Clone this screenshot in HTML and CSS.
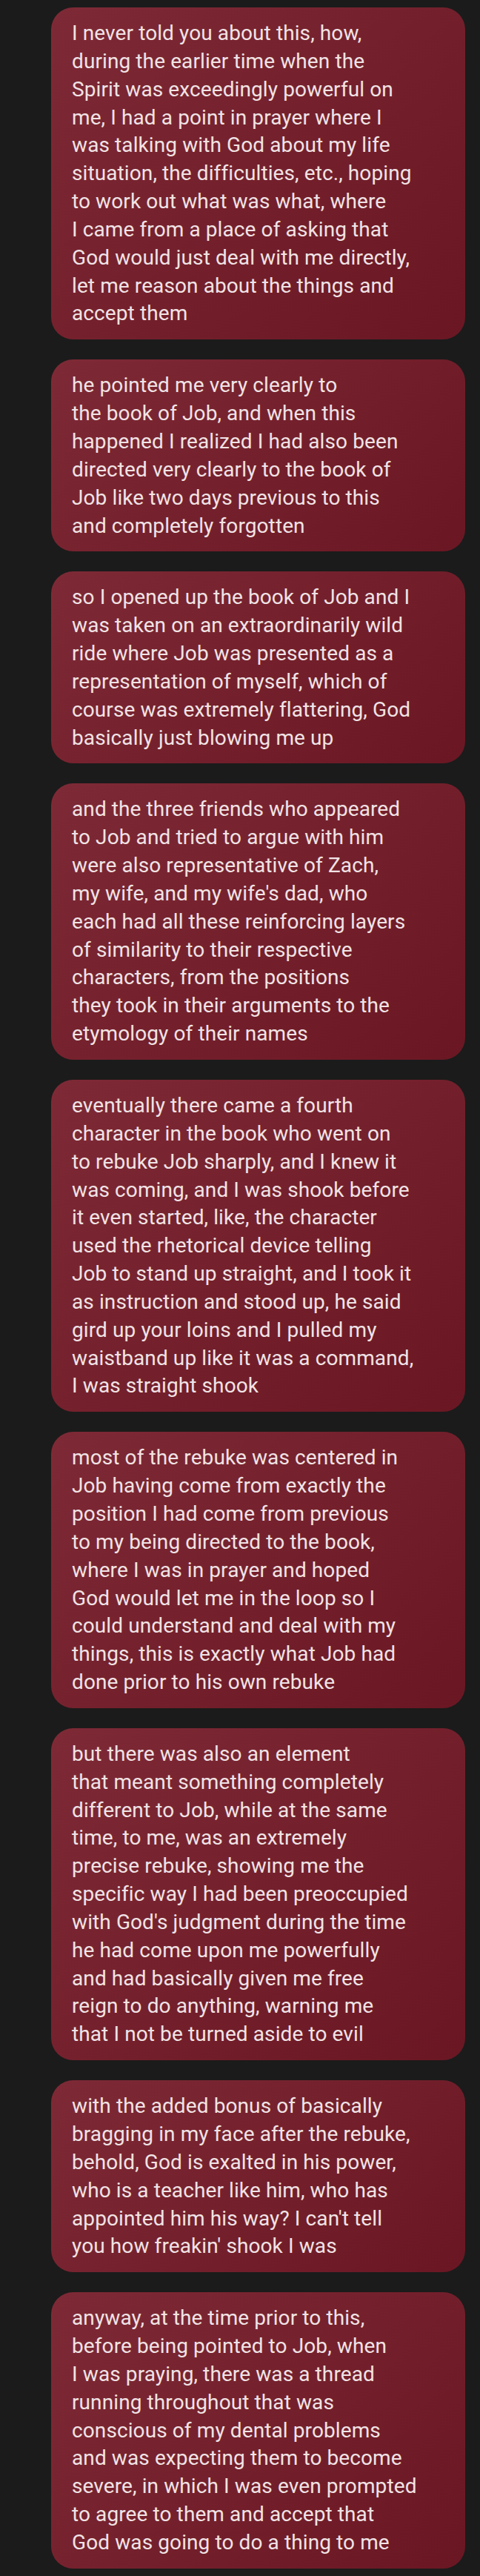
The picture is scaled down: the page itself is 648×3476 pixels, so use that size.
FILE: index.html
```html
<!DOCTYPE html>
<html lang="en">
<head>
<meta charset="utf-8">
<title>Messages</title>
<link rel="stylesheet" href="styles.css">
</head>
<body>
<main class="thread">
  <div class="bubble"><p class="msg">I never told you about this, how,<br>during the earlier time when the<br>Spirit was exceedingly powerful on<br>me, I had a point in prayer where I<br>was talking with God about my life<br>situation, the difficulties, etc., hoping<br>to work out what was what, where<br>I came from a place of asking that<br>God would just deal with me directly,<br>let me reason about the things and<br>accept them</p></div>
  <div class="bubble"><p class="msg">he pointed me very clearly to<br>the book of Job, and when this<br>happened I realized I had also been<br>directed very clearly to the book of<br>Job like two days previous to this<br>and completely forgotten</p></div>
  <div class="bubble"><p class="msg">so I opened up the book of Job and I<br>was taken on an extraordinarily wild<br>ride where Job was presented as a<br>representation of myself, which of<br>course was extremely flattering, God<br>basically just blowing me up</p></div>
  <div class="bubble"><p class="msg">and the three friends who appeared<br>to Job and tried to argue with him<br>were also representative of Zach,<br>my wife, and my wife's dad, who<br>each had all these reinforcing layers<br>of similarity to their respective<br>characters, from the positions<br>they took in their arguments to the<br>etymology of their names</p></div>
  <div class="bubble"><p class="msg">eventually there came a fourth<br>character in the book who went on<br>to rebuke Job sharply, and I knew it<br>was coming, and I was shook before<br>it even started, like, the character<br>used the rhetorical device telling<br>Job to stand up straight, and I took it<br>as instruction and stood up, he said<br>gird up your loins and I pulled my<br>waistband up like it was a command,<br>I was straight shook</p></div>
  <div class="bubble"><p class="msg">most of the rebuke was centered in<br>Job having come from exactly the<br>position I had come from previous<br>to my being directed to the book,<br>where I was in prayer and hoped<br>God would let me in the loop so I<br>could understand and deal with my<br>things, this is exactly what Job had<br>done prior to his own rebuke</p></div>
  <div class="bubble"><p class="msg">but there was also an element<br>that meant something completely<br>different to Job, while at the same<br>time, to me, was an extremely<br>precise rebuke, showing me the<br>specific way I had been preoccupied<br>with God's judgment during the time<br>he had come upon me powerfully<br>and had basically given me free<br>reign to do anything, warning me<br>that I not be turned aside to evil</p></div>
  <div class="bubble"><p class="msg">with the added bonus of basically<br>bragging in my face after the rebuke,<br>behold, God is exalted in his power,<br>who is a teacher like him, who has<br>appointed him his way? I can't tell<br>you how freakin' shook I was</p></div>
  <div class="bubble"><p class="msg">anyway, at the time prior to this,<br>before being pointed to Job, when<br>I was praying, there was a thread<br>running throughout that was<br>conscious of my dental problems<br>and was expecting them to become<br>severe, in which I was even prompted<br>to agree to them and accept that<br>God was going to do a thing to me</p></div>
</main>
</body>
</html>
```

FILE: styles.css
```css
html, body {
  margin: 0;
  padding: 0;
  background: #1b1b1b;
}

.thread {
  display: flex;
  flex-direction: column;
  align-items: stretch;
  gap: 27px;
  padding: 10px 20px 10px 69px;
}

.bubble {
  background: linear-gradient(135deg, #7e2a36 0%, #6a1723 100%);
  border-radius: 30px;
  padding: 16px 28px 16px 28px;
}

.msg {
  margin: 0;
  font-family: Roboto, "Noto Sans", sans-serif;
  font-size: 28px;
  line-height: 37.85px;
  letter-spacing: 0.1px;
  color: #f1e3e5;
  white-space: nowrap;
}
```
